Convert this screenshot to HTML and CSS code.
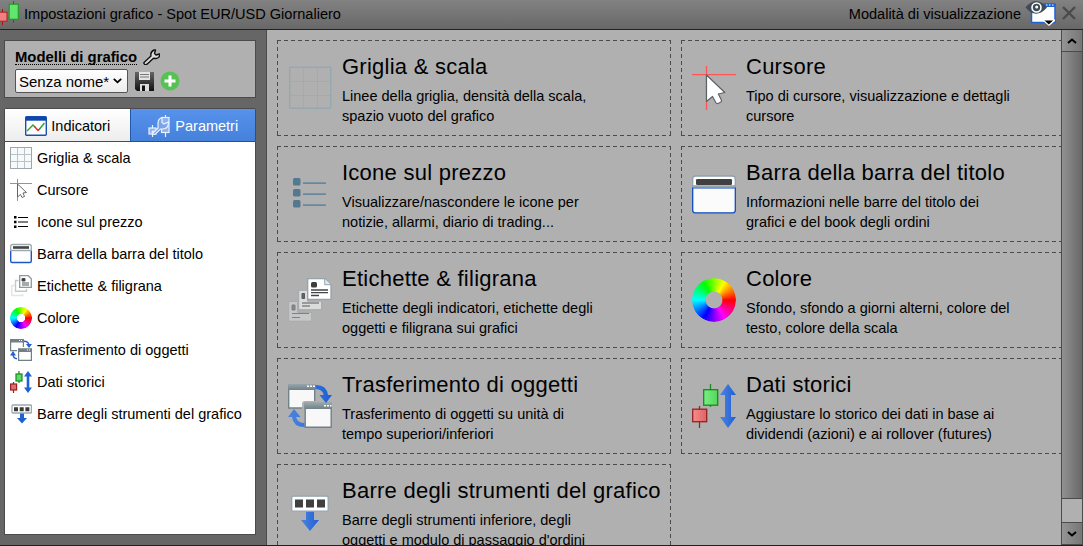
FILE: index.html
```html
<!DOCTYPE html>
<html lang="it">
<head>
    <meta charset="UTF-8">
    <meta name="viewport" content="width=device-width, initial-scale=1.0">
    <title>Impostazioni grafico</title>
    <link rel="stylesheet" href="styles.css">
</head>
<body>
    <!-- shared icons -->
    <svg class="defs" width="0" height="0">
        <defs>
            <linearGradient id="g-blue"><stop offset="0" stop-color="#4d84dd"/><stop offset="1" stop-color="#1c5fd8"/></linearGradient>
            <linearGradient id="g-green"><stop offset="0" stop-color="#7af083"/><stop offset="1" stop-color="#52d65c"/></linearGradient>
            <linearGradient id="g-red"><stop offset="0" stop-color="#fa8c8c"/><stop offset="1" stop-color="#dc6464"/></linearGradient>
            <linearGradient id="g-bar" x2="0" y2="1"><stop offset="0" stop-color="#98a6ac"/><stop offset="1" stop-color="#6f8087"/></linearGradient>
            <linearGradient id="g-disk" x2="0" y2="1"><stop offset="0" stop-color="#666"/><stop offset="1" stop-color="#111"/></linearGradient>
        </defs>
        <symbol id="i-grid" viewBox="0 0 44 44">
            <path d="M15.5 2v40M29.5 2v40M2 15.5h40M2 29.5h40" stroke="#9caeb5" stroke-width="1"/>
            <rect x="1.7" y="1.2" width="41" height="41" fill="none" stroke="#93a8b0" stroke-width="1.3"/>
        </symbol>
        <symbol id="i-grid-s" viewBox="0 0 22 22">
            <rect x=".5" y=".5" width="21" height="21" fill="#f7f9fa" stroke="#9ba9af"/>
            <path d="M7.5 1v20M14.5 1v20M1 7.5h20M1 14.5h20" stroke="#bac4c8"/>
        </symbol>
        <symbol id="i-cursor" viewBox="0 0 44 44">
            <path d="M0 8.6h44M14.5 0v44" stroke="#f55" stroke-width="1.3"/>
            <path d="M14.5 9v26.5l6-5 3.3 6q1 1.6 2.7.8l2-1q1.600-1 .8-2.600l-3-5.700 6.500-1.500z" fill="#fff" stroke="#5e6266" stroke-width="1.2" stroke-linejoin="round"/>
        </symbol>
        <symbol id="i-cursor-s" viewBox="0 0 22 22">
            <path d="M0 4.500h22M7.500 0v22" stroke="#f66"/>
            <path d="M7.500 5v13l3-2.500 1.500 3 2.500-1-1.500-3.500 3.500-.5z" fill="#fff" stroke="#555b60" stroke-width=".9" stroke-linejoin="round"/>
        </symbol>
        <symbol id="i-list" viewBox="0 0 44 44">
            <path d="M15 11.2h23M15 22.200h23M15 33.200h23" stroke="#6789a0" stroke-width="1.700"/>
            <g fill="#537990"><rect x="5" y="6" width="7.500" height="7.500" rx="1.500"/><rect x="5" y="17" width="7.500" height="7.500" rx="1.500"/><rect x="5" y="28" width="7.500" height="7.500" rx="1.500"/></g>
        </symbol>
        <symbol id="i-list-s" viewBox="0 0 22 22">
            <path d="M8 6.500h10M8 11h10M8 15.500h10" stroke="#000" stroke-width="1.200"/>
            <path d="M4 5h2.500v2.500H4zM4 9.700h2.500v2.500H4zM4 14.400h2.500v2.500H4z"/>
        </symbol>
        <symbol id="i-window" viewBox="0 0 44 44">
            <path d="M.7 14V7q0-3 3-3h36.600q3 0 3 3v7z" fill="#fff" stroke="#8ea0aa" stroke-width="1.300"/>
            <path d="M.7 15.800v22.500q0 2.500 2.500 2.500h37.600q2.500 0 2.500-2.500V15.800z" fill="#fbfbfb" stroke="#0d4cc0" stroke-width="1.300"/>
            <path d="M.7 15.500h42.600" stroke="#84959f"/>
            <rect x="4" y="7" width="36" height="6" rx="1.200" fill="#404040"/>
        </symbol>
        <symbol id="i-window-s" viewBox="0 0 22 22">
            <path d="M.7 8V3.500q0-2 2-2h16.600q2 0 2 2V8z" fill="#fff" stroke="#9ba9b0" stroke-width="1.300"/>
            <path d="M.7 8v10q0 1.500 1.500 1.500h17.600q1.500 0 1.500-1.500V8" fill="#fff" stroke="#1c58c4" stroke-width="1.400"/>
            <path d="M.5 7.500h21" stroke="#9ba9b0" stroke-width="1.500"/>
            <rect x="3" y="3.200" width="16" height="2.600" fill="#444"/>
        </symbol>
        <symbol id="i-page" viewBox="0 0 25 22">
            <path d="M.7.700h17l6.300 6v14.600H.7z" fill="#fff" stroke="#93a4ad" stroke-width="1.300"/>
            <path d="M17.700.700v6h6.300" fill="#e3e9ec" stroke="#93a4ad"/>
            <rect x="4" y="4" width="6" height="5.500" rx="1.500" fill="#3d3d3d"/>
            <path d="M4 12h17M4 14.700h17M4 17.500h8" stroke="#444" stroke-width="1.300"/>
        </symbol>
        <symbol id="i-labels" viewBox="0 0 44 44">
            <g opacity=".38">
                <path d="M.7 23.500h9v11h14v8.700H.7z" fill="#eee" stroke="#98a5ac"/>
                <path d="M4 27h3v5H4zM4 35.500h17M4 39.500h8" fill="#444" stroke="#333"/>
            </g>
            <g opacity=".7">
                <path d="M10.700 12.200h9v11h14v8.500h-23z" fill="#eee" stroke="#98a5ac"/>
                <path d="M14 15.500h2.500v5H14zM14 25h17M14 28h8" fill="#444" stroke="#333"/>
            </g>
            <use href="#i-page" x="19" y="0" width="25" height="22"/>
        </symbol>
        <symbol id="i-labels-s" viewBox="0 0 22 22">
            <path d="M1.700 10.500v10h11v-1.500M4.500 10.500H1.700" fill="none" stroke="#e3e6e8" stroke-width="1.500"/>
            <path d="M8.500 5.500h-3v10.800h11V14" fill="#fff" stroke="#c3cacf" stroke-width="1.400"/>
            <path d="M9.700.700h8.600l3 3v8.600H9.700z" fill="#fff" stroke="#8b9ba3" stroke-width="1.300"/>
            <path d="M12 3.500h3v2.500h-3zM12 8h7M12 10h7" fill="#333" stroke="#555"/>
        </symbol>
        <symbol id="i-transfer" viewBox="0 0 44 44">
            <path d="M.7 1h26v23h-26z" fill="#f8f8f8" stroke="#6f8289" stroke-width="1.400"/>
            <path d="M0 0h27.500v6H0z" fill="url(#g-bar)"/>
            <path d="M14 25V20q0-3 3-3h11v8z" fill="#b0b0b0"/>
            <path d="M17.200 19.500h26v23.800h-26z" fill="#f8f8f8" stroke="#6f8289" stroke-width="1.400"/>
            <path d="M16.500 19h27.500v6H16.500z" fill="url(#g-bar)"/>
            <path d="M19 1.500h2v1.500h-2zM22 1.500h2v1.500h-2zM25 1.500h2v1.500h-2zM36 21h2v1.500h-2zM39 21h2v1.500h-2zM42 21h1.500v1.500h-1.500z" fill="#fff"/>
            <path d="M27.500 1q11-.500 12.500 10h4l-6 8-6.500-8h4.200q-1-5.500-8.200-6zM16.500 43Q5 43 4 33H0l6-8 6.500 8H8q1.500 6 8.500 6z" fill="url(#g-blue)"/>
        </symbol>
        <symbol id="i-transfer-s" viewBox="0 0 22 22">
            <path d="M.6.600h12.800v11H.6z" fill="#fff" stroke="#727f85" stroke-width="1.200"/>
            <path d="M0 0h14v3.500H0z" fill="#727f85"/>
            <path d="M7 8h8v5H7z" fill="#fff"/>
            <path d="M8.600 10h12.800v11.400H8.600z" fill="#fff" stroke="#727f85" stroke-width="1.200"/>
            <path d="M8 9.500h14V13H8z" fill="#727f85"/>
            <path d="M9 1.500h1M11 1.500h1M17 11h1M19 11h1" stroke="#fff"/>
            <path d="M14 2.300q4.500 0 5 4M7 19.700q-3.500 0-4-4" fill="none" stroke="#1f60d4" stroke-width="1.400"/>
            <path d="M16 5h6l-3 4zM0 16.500h6l-3-4.500z" fill="#1f60d4"/>
        </symbol>
        <symbol id="i-history" viewBox="0 0 44 44">
            <path d="M18.500 0v6M18.500 21v2" stroke="#1d8b25" stroke-width="1.300"/>
            <rect x="11.700" y="5.700" width="14" height="15.500" fill="url(#g-green)" stroke="#1b8622" stroke-width="1.300"/>
            <path d="M7.500 22v4M7.500 38v6" stroke="#9a2626" stroke-width="1.300"/>
            <rect x=".7" y="25.200" width="14" height="12.500" fill="url(#g-red)" stroke="#962222" stroke-width="1.300"/>
            <path d="M36 0l8 11h-5v22h5l-8 11-8-11h5V11h-5z" fill="url(#g-blue)"/>
        </symbol>
        <symbol id="i-history-s" viewBox="0 0 22 22">
            <path d="M9 0v12" stroke="#168a1e" stroke-width="1.200"/>
            <rect x="6" y="3" width="6" height="7" fill="#62d86a" stroke="#168a1e" stroke-width="1.200"/>
            <path d="M3.500 11v11" stroke="#962222" stroke-width="1.200"/>
            <rect x=".6" y="13" width="6" height="6" fill="#e26c6c" stroke="#962222" stroke-width="1.200"/>
            <path d="M18 0l4 5.500h-2.700v11H22L18 22l-4-5.500h2.700v-11H14z" fill="#1f60d4"/>
        </symbol>
        <symbol id="i-toolbars" viewBox="0 0 44 44">
            <path d="M18 21h8v9h5l-9 11-9-11h5z" fill="url(#g-blue)"/>
            <rect x="3.700" y="6.200" width="36.500" height="15" rx="1.500" fill="#fff" stroke="#93a4ad" stroke-width="1.300"/>
            <path d="M7 9.500h8v8H7zM18 9.500h8v8h-8zM29 9.500h8v8h-8z" fill="#404040"/>
        </symbol>
        <symbol id="i-toolbars-s" viewBox="0 0 22 22">
            <path d="M10 10h4v5h3l-5 5.500L7 15h3z" fill="#1f60d4"/>
            <rect x="2" y="2" width="19.400" height="8" rx=".8" fill="#fff" stroke="#9ba9b0" stroke-width="1.300"/>
            <path d="M4 4.200h4v4H4zM9.700 4.200h4v4h-4zM15.400 4.200h4v4h-4z" fill="#3a3a3a"/>
        </symbol>
    </svg>

    <div class="window">
        <header class="titlebar">
            <svg class="logo" width="20" height="24" viewBox="0 0 20 24">
                <path d="M2.500 8v3M2.500 20v4" stroke="#a11"/>
                <rect x="-5" y="11.200" width="12" height="9" fill="#f07f7f" stroke="#a22"/>
                <path d="M13.500 0v3M13.500 18v4" stroke="#0a7a12"/>
                <rect x="9.200" y="3.200" width="9" height="15" fill="#62e56c" stroke="#159a1d"/>
            </svg>
            <span>Impostazioni grafico - Spot EUR/USD Giornaliero</span>
            <span class="mode">Modalità di visualizzazione</span>
            <svg class="eye" width="32" height="26" viewBox="0 0 32 26">
                <rect x="6.500" y="4" width="23.500" height="18.500" fill="#fff" stroke="#1f61d6" stroke-width="1.500"/>
                <path d="M18 5.500h12" stroke="#1f61d6" stroke-width="3"/>
                <path d="M21 5h1.500M24 5h1.500M27 5h1.500" stroke="#fff"/>
                <path d="M.5 7.500Q11-5.500 22 7.500 11 20 .5 7.500z" fill="#3e4c56"/>
                <circle cx="11.500" cy="7.500" r="4.500" fill="#3e4c56" stroke="#fff" stroke-width="1.600"/>
                <circle cx="11.700" cy="7" r="1.500" fill="#fff"/>
                <path d="M18 19.500h12v1.500l-6 5-6-5z" fill="#fff"/>
                <path d="M19.500 20.500h8.500l-4.200 4z"/>
            </svg>
            <svg class="close" width="14" height="14" viewBox="0 0 14 14"><path d="M1 1l12 12M13 1L1 13" stroke="#4a4a4a" stroke-width="2.400"/></svg>
        </header>

        <div class="content">
            <aside class="sidebar">
                <div class="models">
                    <div class="models-title">
                        <b>Modelli di grafico</b>
                        <svg width="17" height="16" viewBox="0 0 17 16"><path d="M1 13.500l7-6.500q-1-4 3-6h1.500l-1 3.500 1.500 1.500 3.500-1q.5 4-3.500 4.500l-2.500-.3-6.500 6q-1.500.800-2.500 0-1-.8-.5-1.700z" fill="#ddd" stroke="#111" stroke-width="1.400" stroke-linejoin="round"/></svg>
                    </div>
                    <div class="models-row">
                        <div class="select">Senza nome*
                            <svg width="9" height="6" viewBox="0 0 9 6"><path d="M.8.800l3.700 3.500L8.200.800" fill="none" stroke="#000" stroke-width="1.800"/></svg>
                        </div>
                        <svg class="save" width="19" height="19" viewBox="0 0 19 19">
                            <path d="M0 0h19v19H2l-2-2z" fill="url(#g-disk)"/>
                            <path d="M4 0h11v8H4z" fill="#e4e4e4"/>
                            <path d="M5 2.500h9M5 5h9" stroke="#777"/>
                            <path d="M5 12h9v7H5z" fill="#ddd"/>
                            <path d="M7 13.500h3V19H7z" fill="#111"/>
                        </svg>
                        <svg width="20" height="20" viewBox="0 0 20 20"><circle cx="10" cy="10" r="9.500" fill="#56c254"/><path d="M10 4.500v11M4.500 10h11" stroke="#fff" stroke-width="3"/></svg>
                    </div>
                </div>

                <div class="tabs">
                    <div class="tab">
                        <svg width="22" height="20" viewBox="0 0 22 20">
                            <rect x=".7" y=".7" width="20.600" height="18.600" rx="1" fill="#fff" stroke="#1a50ac" stroke-width="1.400"/>
                            <path d="M.7.700h20.600v4H.7z" fill="#0d47ad"/>
                            <path d="M2 15l6-6 2 2" fill="none" stroke="#22a92a" stroke-width="1.400"/>
                            <path d="M9.500 10.500l3.500 4 2-2" fill="none" stroke="#d22" stroke-width="1.400"/>
                            <path d="M14.500 13l5-6" stroke="#22a92a" stroke-width="1.400"/>
                        </svg>
                        Indicatori
                    </div>
                    <div class="tab active">
                        <svg width="23" height="22" viewBox="0 0 23 22" fill="#8eb2ef" stroke="#e9f1ff" stroke-width="1.200">
                            <path d="M17.500 0v22M4.500 10v12"/>
                            <rect x="13.500" y="2.500" width="7.500" height="15"/>
                            <rect x="1" y="13" width="7" height="6"/>
                            <path d="M5 18l5-5V8q0-4 4-5.500v5l2 1.500 4.500-2q0 7-6 7h-2l-5 5q-2 1-3-.5t.5-2.500z" fill="#7ba3e9"/>
                        </svg>
                        Parametri
                    </div>
                </div>

                <ul class="params">
                    <li><svg><use href="#i-grid-s"/></svg>Griglia &amp; scala</li>
                    <li><svg><use href="#i-cursor-s"/></svg>Cursore</li>
                    <li><svg><use href="#i-list-s"/></svg>Icone sul prezzo</li>
                    <li><svg><use href="#i-window-s"/></svg>Barra della barra del titolo</li>
                    <li><svg><use href="#i-labels-s"/></svg>Etichette &amp; filigrana</li>
                    <li><i class="wheel"></i>Colore</li>
                    <li><svg><use href="#i-transfer-s"/></svg>Trasferimento di oggetti</li>
                    <li><svg><use href="#i-history-s"/></svg>Dati storici</li>
                    <li><svg><use href="#i-toolbars-s"/></svg>Barre degli strumenti del grafico</li>
                </ul>
            </aside>

            <main class="cards">
                <div class="card">
                    <svg><use href="#i-grid"/></svg>
                    <div><h2>Griglia &amp; scala</h2><p>Linee della griglia, densità della scala,<br>spazio vuoto del grafico</p></div>
                </div>
                <div class="card">
                    <svg><use href="#i-cursor"/></svg>
                    <div><h2>Cursore</h2><p>Tipo di cursore, visualizzazione e dettagli<br>cursore</p></div>
                </div>
                <div class="card">
                    <svg><use href="#i-list"/></svg>
                    <div><h2>Icone sul prezzo</h2><p>Visualizzare/nascondere le icone per<br>notizie, allarmi, diario di trading...</p></div>
                </div>
                <div class="card">
                    <svg><use href="#i-window"/></svg>
                    <div><h2>Barra della barra del titolo</h2><p>Informazioni nelle barre del titolo dei<br>grafici e del book degli ordini</p></div>
                </div>
                <div class="card">
                    <svg><use href="#i-labels"/></svg>
                    <div><h2>Etichette &amp; filigrana</h2><p>Etichette degli indicatori, etichette degli<br>oggetti e filigrana sui grafici</p></div>
                </div>
                <div class="card">
                    <i class="wheel"></i>
                    <div><h2>Colore</h2><p>Sfondo, sfondo a giorni alterni, colore del<br>testo, colore della scala</p></div>
                </div>
                <div class="card">
                    <svg><use href="#i-transfer"/></svg>
                    <div><h2>Trasferimento di oggetti</h2><p>Trasferimento di oggetti su unità di<br>tempo superiori/inferiori</p></div>
                </div>
                <div class="card">
                    <svg><use href="#i-history"/></svg>
                    <div><h2>Dati storici</h2><p>Aggiustare lo storico dei dati in base ai<br>dividendi (azioni) e ai rollover (futures)</p></div>
                </div>
                <div class="card">
                    <svg><use href="#i-toolbars"/></svg>
                    <div><h2>Barre degli strumenti del grafico</h2><p>Barre degli strumenti inferiore, degli<br>oggetti e modulo di passaggio d'ordini</p></div>
                </div>
            </main>

            <div class="scrollbar">
                <div class="arrow"><svg width="10" height="6" viewBox="0 0 10 6"><path d="M1 5l4-3.500L9 5" fill="none" stroke="#000" stroke-width="2"/></svg></div>
                <div class="thumb"></div>
                <div class="arrow"><svg width="10" height="6" viewBox="0 0 10 6"><path d="M1 1l4 3.500L9 1" fill="none" stroke="#000" stroke-width="2"/></svg></div>
            </div>
        </div>
    </div>
</body>
</html>
```

FILE: styles.css
```css
*{
    box-sizing: border-box;
}
body{
    margin: 0;
    overflow: hidden;
    font-family: "Liberation Sans", Arial, sans-serif;
    font-size: 14.5px;
    color: #000;
}
svg{
    display: block;
    flex: none;
}
.defs{
    position: absolute;
}
.window{
    width: 1083px;
    height: 546px;
    display: flex;
    flex-direction: column;
    background-color: #666;
    border-bottom: 1px solid #202020;
}
.titlebar{
    height: 30px;
    flex: none;
    display: flex;
    align-items: center;
    padding-right: 7px;
    border-bottom: 1px solid #222;
    background: linear-gradient(#828282, #686868);
}
.titlebar span{
    font-size: 14.55px;
    margin-top: -1px;
}
.logo{
    margin-right: 4px;
    margin-top: -3px;
}
.titlebar .mode{
    margin-left: auto;
}
.eye{
    margin: -3px 5px 0 4px;
}
.close{
    margin-top: -3px;
}
.content{
    flex: 1;
    min-height: 0;
    display: flex;
}

/* left column */
.sidebar{
    width: 267px;
    flex: none;
    display: flex;
    flex-direction: column;
    padding: 10px 10px 10px 4px;
    border-right: 1px solid #4b4b4b;
}
.models{
    width: 252px;
    height: 58px;
    padding: 8px 10px 0;
    background-color: #b0b0b0;
    border: 1px solid #4b4b4b;
}
.models-title{
    display: flex;
    gap: 6px;
}
.models-title b{
    height: 16px;
    font-size: 14.85px;
    line-height: 17px;
    border-bottom: 1px dotted #000;
}
.models-row{
    display: flex;
    align-items: center;
    margin-top: 4px;
}
.select{
    width: 113px;
    height: 24px;
    display: flex;
    align-items: center;
    justify-content: space-between;
    padding: 0 5px 0 3px;
    font-size: 15px;
    border: 1px solid #555;
    border-radius: 2px;
    background: linear-gradient(#fff, #ececec);
    white-space: nowrap;
}
.save{
    margin: 0 6px 0 7px;
}
.tabs{
    width: 252px;
    height: 34px;
    flex: none;
    margin-top: 10px;
    display: flex;
    border: 1px solid #4b4b4b;
    border-radius: 2px 2px 0 0;
}
.tab{
    flex: 1;
    display: flex;
    align-items: center;
    justify-content: center;
    gap: 4px;
    padding: 2px 0 0 1px;
    background: linear-gradient(#fff, #ededed);
}
.tab.active{
    color: #fff;
    background: linear-gradient(#5792ec, #4580da);
    border-left: 1px solid #2358ae;
}
.params{
    width: 252px;
    flex: 1;
    list-style: none;
    margin: 0;
    padding: 0 0 0 5px;
    background-color: #fff;
    border: 1px solid #4b4b4b;
    border-top: 0;
}
.params li{
    height: 32px;
    display: flex;
    align-items: center;
    gap: 5px;
    white-space: nowrap;
}
.params svg, .params .wheel{
    width: 22px;
    height: 22px;
}
.wheel{
    flex: none;
    border-radius: 50%;
    background: conic-gradient(from 90deg, #f00, #f0f, #00f, #0ff, #0f0, #ff0, #f00);
    -webkit-mask: radial-gradient(circle closest-side, transparent 36%, #000 40%);
    mask: radial-gradient(circle closest-side, transparent 36%, #000 40%);
}

/* cards */
.cards{
    width: 794px;
    flex: none;
    overflow: hidden;
    display: grid;
    grid-template-columns: 394px 394px;
    grid-auto-rows: 96px;
    gap: 10px;
    padding: 10px;
    background-color: #b0b0b0;
}
.card{
    --h: repeating-linear-gradient(90deg, #4b4b4b 0 4px, transparent 4px 7px);
    --v: repeating-linear-gradient(#4b4b4b 0 4px, transparent 4px 7px);
    display: flex;
    gap: 10px;
    padding: 14px 0 0 11px;
    background: var(--h) top / 100% 1px no-repeat, var(--h) bottom / 100% 1px no-repeat, var(--v) left / 1px 100% no-repeat, var(--v) right / 1px 100% no-repeat;
}
.card svg, .card .wheel{
    width: 44px;
    height: 44px;
    margin-top: 12px;
}
.card h2{
    margin: 0 0 6px;
    font-size: 22px;
    line-height: 26px;
    font-weight: normal;
    letter-spacing: 0.25px;
    white-space: nowrap;
}
.card p{
    margin: 0;
    line-height: 20px;
    white-space: nowrap;
}

/* scrollbar */
.scrollbar{
    width: 22px;
    flex: none;
    display: flex;
    flex-direction: column;
    border: 1px solid #4b4b4b;
    border-top: 0;
    background-color: #b0b0b0;
}
.arrow{
    height: 21px;
    flex: none;
    display: flex;
    align-items: center;
    justify-content: center;
    background: linear-gradient(90deg, #949494, #777);
}
.thumb{
    height: 448px;
    margin-bottom: auto;
    border: solid #4b4b4b;
    border-width: 1px 0;
    background: linear-gradient(90deg, #919191, #686868);
}
.arrow:last-child{
    height: 22px;
    border-top: 1px solid #4b4b4b;
}
```
